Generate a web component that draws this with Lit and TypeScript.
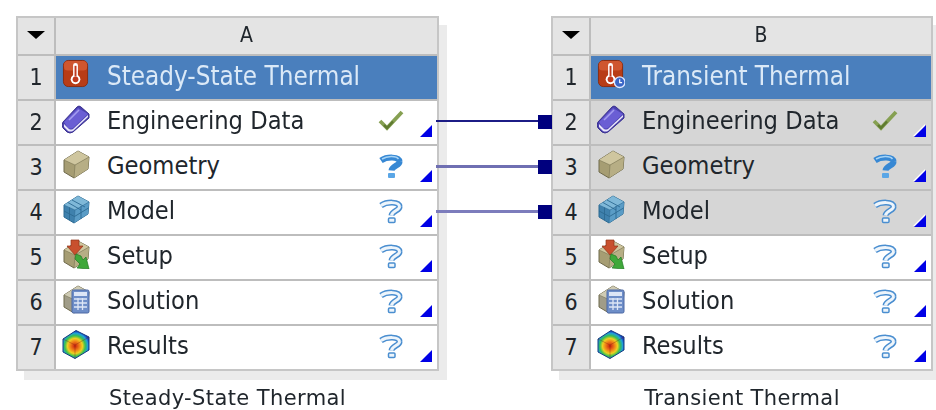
import { LitElement, html, css, svg } from "lit";
import { customElement } from "lit/decorators.js";

const cube = (top: string, left: string, right: string, stroke = "#6f6a4c") => svg`
  <path d="M3 11 L17 2 L28 8 L27 20 L13 29 L3 23 Z" fill="${left}" stroke="${stroke}" stroke-width="1"/>
  <path d="M3 11 L17 2 L28 8 L14 16 Z" fill="${top}"/>
  <path d="M14 16 L28 8 L27 20 L13 29 Z" fill="${right}"/>
  <path d="M3 11 L14 16 L28 8 M14 16 L13 29" fill="none" stroke="${stroke}" stroke-width=".7" opacity=".7"/>`;

const thermo = (clock: boolean) => svg`
  <rect x="1.5" y="1.5" width="25" height="27" rx="5" fill="#b83c16" stroke="#8a2c10"/>
  <rect x="2" y="2" width="24" height="10" rx="4" fill="#d9613a" opacity=".7"/>
  <rect x="11.5" y="4" width="5" height="16" rx="2.5" fill="#fff"/>
  <circle cx="14" cy="21" r="5" fill="#fff"/>
  <rect x="13" y="7" width="2" height="11" fill="#c03a20"/>
  <circle cx="14" cy="21" r="3" fill="#c03a20"/>
  ${clock ? svg`<circle cx="23.5" cy="24" r="5.5" fill="#3a66c8" stroke="#dfe8ff" stroke-width="1.4"/><path d="M23.5 21 V24.5 H26" stroke="#fff" stroke-width="1.2" fill="none"/>` : null}`;

const icons: Record<string, unknown> = {
  book: svg`
    <path d="M2 18 L16 3 Q18 1 20 3 L28 10 L28 14 L12 28 Q9 30 6 28 L2 24 Q0 21 2 18 Z" fill="#4a40ae" stroke="#3b3290"/>
    <path d="M3 18 L17 4 L27 10 L12 24 Q9 25 7 24 Z" fill="#6a5ed4"/>
    <path d="M3 20 L8 25 Q10 26 12 25 L27 11 L27 13 L12 27 Q9 28 7 27 L3 23 Z" fill="#e9e6fa"/>
    <path d="M8 16 L18 6" stroke="#a49cf0" stroke-width="1.6"/>`,
  geom: cube("#cfc69f", "#a69d73", "#b7ae85"),
  model: svg`
    ${cube("#7fb8d8", "#3f81ad", "#5a9cc6", "#2d6a92")}
    <path d="M7 8.5 L20 16 M11 6 L24 13 M8.5 13.5 L8.5 26 M20 12 L20 25 M3 17 L13.5 22.5 L27.5 14" fill="none" stroke="#2d6a92" stroke-width=".9"/>`,
  setup: svg`
    ${cube("#cfc69f", "#a69d73", "#b7ae85")}
    <path d="M10 1 H18 V7 H22 L14 16 L6 7 H10 Z" fill="#c8502e" stroke="#8f3418" stroke-width=".7"/>
    <path d="M15 15 L20 17 L22 21 L25 18 L28 30 L16 29 L19 25 L14 20 Z" fill="#3fa83a" stroke="#217a22" stroke-width=".7"/>`,
  solution: svg`
    ${cube("#cfcbb4", "#a09c88", "#b0ac98")}
    <rect x="11" y="6" width="17" height="23" rx="1.5" fill="#6e8ec8" stroke="#4c68a4"/>
    <rect x="13" y="8" width="13" height="4" fill="#dde6f6"/>
    <path d="M13 15 H26 M13 19 H26 M13 23 H26 M17 14 V26 M21.5 14 V26" stroke="#dde6f6" stroke-width="1.3"/>`,
  results: svg`
    <defs><radialGradient id="heat" gradientUnits="userSpaceOnUse" cx="14" cy="17" r="15">
      <stop offset="0" stop-color="#c81e10"/><stop offset=".3" stop-color="#f08018"/><stop offset=".5" stop-color="#eed020"/>
      <stop offset=".68" stop-color="#38c050"/><stop offset=".85" stop-color="#20a0d8"/><stop offset="1" stop-color="#1838c0"/>
    </radialGradient></defs>
    <path d="M2 10 L15 1.5 L28 8 L28 21 L14 29.5 L2 23 Z" fill="url(#heat)" stroke="#123a80"/>
    <path d="M2 10 L14 16 L28 8 M14 16 V29.5" fill="none" stroke="#7a2010" stroke-width=".6" opacity=".6"/>`,
};

const QMARK = "M2 6.5 C8 2.5 20 2.5 20.5 7.5 C21 11.5 13 11.5 12.5 16.5";

const solidQ = svg`
  <path d="${QMARK}" fill="none" stroke="#3788d4" stroke-width="6"/>
  <rect x="9" y="19" width="7" height="5" rx="1" fill="#5aa6e6"/>
  <path d="M3 5 C8 2 17 1.5 19.5 5" fill="none" stroke="#a6d4f6" stroke-width="1.5"/>`;

const outlineQ = svg`
  <path d="${QMARK}" fill="none" stroke="#4a8ed0" stroke-width="6"/>
  <path d="${QMARK}" fill="none" stroke="#eef5fb" stroke-width="3"/>
  <rect x="9.5" y="19" width="6.5" height="4.5" rx="1" fill="#eef5fb" stroke="#4a8ed0" stroke-width="1.5"/>`;

const check = svg`
  <path d="M1 12 L8 19 L23 3" fill="none" stroke="#86a052" stroke-width="3.8"/>
  <path d="M5 16 L8 19 L14 12.5" fill="none" stroke="#5e7a30" stroke-width="2.4"/>`;

interface Row { icon: string; label: string; status: "check" | "solid" | "outline" }
interface System { title: string; caption: string; letter: string; width: number; clock: boolean; shaded: number[] }

const rowsBase: Row[] = [
  { icon: "book", label: "Engineering Data", status: "check" },
  { icon: "geom", label: "Geometry", status: "solid" },
  { icon: "model", label: "Model", status: "outline" },
  { icon: "setup", label: "Setup", status: "outline" },
  { icon: "solution", label: "Solution", status: "outline" },
  { icon: "results", label: "Results", status: "outline" },
];

const systems: System[] = [
  { title: "Steady-State Thermal", caption: "Steady-State Thermal", letter: "A", width: 423, clock: false, shaded: [] },
  { title: "Transient Thermal", caption: "Transient Thermal", letter: "B", width: 382, clock: true, shaded: [0, 1, 2] },
];

const links = [
  { y: 120, h: 2, color: "#1c1c86" },
  { y: 165, h: 3, color: "#6f6fb2" },
  { y: 210, h: 3, color: "#7c7cbc" },
];

@customElement("app-root")
export class AppRoot extends LitElement {
  static styles = css`
    :host { display: block; width: 936px; height: 410px; overflow: hidden; background: #fff; font-family: "DejaVu Sans", "Noto Sans", sans-serif; color: #20262c; }
    .stage { position: relative; display: flex; gap: 112px; padding: 16px 0 0 16px; filter: blur(0.45px); }
    .system { display: flex; flex-direction: column; align-items: center; flex: none; }
    .table { display: grid; grid-template-columns: 36px 1fr; grid-template-rows: 36px repeat(7, 43px); gap: 2px; width: 100%; box-sizing: border-box; border: 2px solid #c6c6c6; background: #bdbdbd; box-shadow: 8px 9px 0 #ebebeb; font-stretch: condensed; }
    .hcell, .num { background: #e4e4e4; display: flex; align-items: center; justify-content: center; box-sizing: border-box; padding-bottom: 2px; }
    .num { font-size: 23px; }
    .letter { font-size: 21px; }
    .arrow { width: 0; height: 0; border-left: 9px solid transparent; border-right: 9px solid transparent; border-top: 8px solid #000; }
    .cell { display: flex; align-items: center; background: #fff; padding: 0 0 4px 6px; box-sizing: border-box; font-size: 25.2px; min-width: 0; }
    .cell.shaded { background: #d6d6d6; }
    .cell.title { background: #4a7fbd; color: #dbe9f7; font-size: 25.8px; }
    .icon { width: 28px; height: 30px; flex: none; margin: 0 17px 3px 0; }
    .label { flex: 1; white-space: nowrap; }
    .status { width: 24px; height: 24px; flex: none; overflow: visible; }
    .tri { width: 12px; height: 12px; flex: none; align-self: flex-end; margin: 0 5px 3px 17px; filter: drop-shadow(-1px -1px 0 #fff); }
    .caption { margin-top: 14px; font-size: 21px; letter-spacing: .4px; white-space: nowrap; line-height: 26px; }
    .link { position: absolute; left: 436px; width: 102px; }
    .plug { position: absolute; left: 538px; width: 14px; height: 14px; background: #00007e; }
  `;

  private statusIcon(s: Row["status"]) {
    const body = s === "check" ? check : s === "solid" ? solidQ : outlineQ;
    return html`<svg class="status" viewBox="0 0 24 24">${body}</svg>`;
  }

  private system(sys: System) {
    return html`
      <div class="system" style="width:${sys.width}px">
        <div class="table">
          <div class="hcell"><div class="arrow"></div></div>
          <div class="hcell letter">${sys.letter}</div>
          <div class="num">1</div>
          <div class="cell title">
            <svg class="icon" viewBox="0 0 29 31">${thermo(sys.clock)}</svg>
            <span class="label">${sys.title}</span>
          </div>
          ${rowsBase.map((r, i) => html`
            <div class="num">${i + 2}</div>
            <div class="cell ${sys.shaded.includes(i) ? "shaded" : ""}">
              <svg class="icon" viewBox="1 0 28 30">${icons[r.icon]}</svg>
              <span class="label">${r.label}</span>
              ${this.statusIcon(r.status)}
              <svg class="tri" viewBox="0 0 12 12"><path d="M0 12 L12 0 V12 Z" fill="#0000e6"/></svg>
            </div>`)}
        </div>
        <div class="caption">${sys.caption}</div>
      </div>`;
  }

  render() {
    return html`
      <div class="stage">
        ${systems.map((s) => this.system(s))}
        ${links.map((l) => html`
          <div class="link" style="top:${l.y}px;height:${l.h}px;background:${l.color}"></div>
          <div class="plug" style="top:${l.y - 5}px"></div>`)}
      </div>`;
  }
}
